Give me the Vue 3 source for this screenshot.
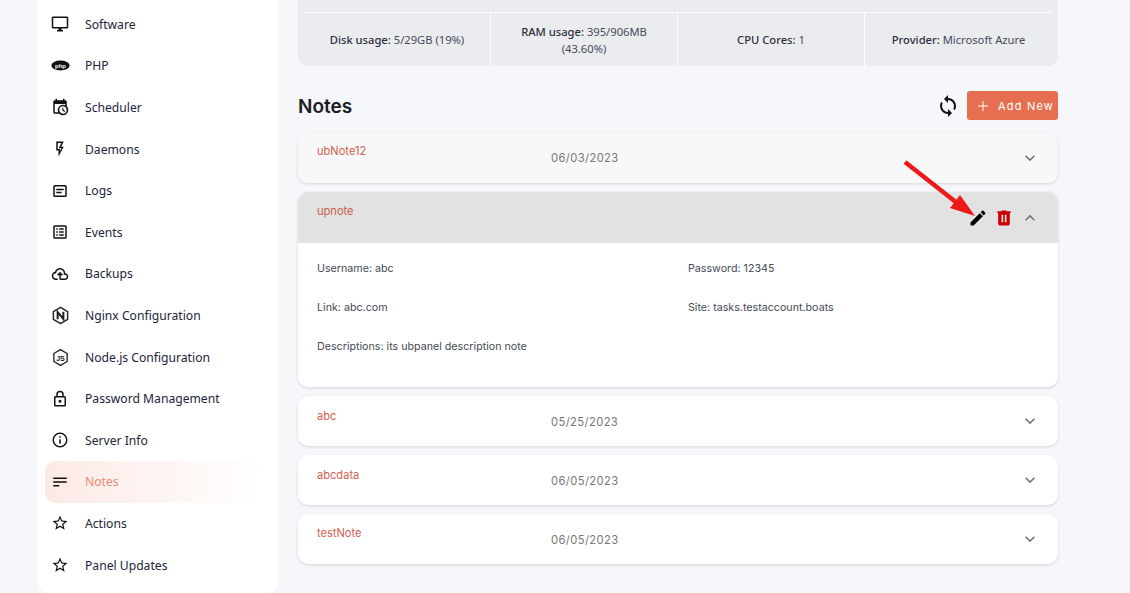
<script setup>
const P = {
  monitor: 'M21,16H3V4H21M21,2H3C1.89,2 1,2.89 1,4V16A2,2 0 0,0 3,18H10V20H8V22H16V20H14V18H21A2,2 0 0,0 23,16V4C23,2.89 22.1,2 21,2Z',
  clock: 'M15,13H16.5V15.82L18.94,17.23L18.19,18.53L15,16.69V13M19,8H5V19H9.67C9.24,18.09 9,17.07 9,16A7,7 0 0,1 16,9C17.07,9 18.09,9.24 19,9.67V8M5,21C3.89,21 3,20.1 3,19V5C3,3.89 3.89,3 5,3H6V1H8V3H16V1H18V3H19A2,2 0 0,1 21,5V11.1C22.24,12.36 23,14.09 23,16A7,7 0 0,1 16,23C14.09,23 12.36,22.24 11.1,21H5M16,11.15A4.85,4.85 0 0,0 11.15,16C11.15,18.68 13.32,20.85 16,20.85A4.85,4.85 0 0,0 20.85,16C20.85,13.32 18.68,11.15 16,11.15Z',
  bolt: 'M7,2H17L13.5,9H17L10,22V14H7V2M9,4V12H12V14.66L14,11H10.24L13.76,4H9Z',
  logs: 'M5,4H19A2,2 0 0,1 21,6V18A2,2 0 0,1 19,20H5A2,2 0 0,1 3,18V6A2,2 0 0,1 5,4M5,6V18H19V6H5M7,9H17V11H7V9M7,13H14V15H7V13Z',
  events: 'M5,3H19A2,2 0 0,1 21,5V19A2,2 0 0,1 19,21H5A2,2 0 0,1 3,19V5A2,2 0 0,1 5,3M5,5V19H19V5H5M7,7H9V9H7V7M11,7H17V9H11V7M7,11H9V13H7V11M11,11H17V13H11V11M7,15H9V17H7V15M11,15H17V17H11V15Z',
  cloud: 'M6.5 20Q4.22 20 2.61 18.43 1 16.85 1 14.58 1 12.63 2.17 11.1 3.35 9.57 5.25 9.15 5.88 6.85 7.75 5.43 9.63 4 12 4 14.93 4 16.96 6.04 19 8.07 19 11 20.73 11.2 21.86 12.5 23 13.78 23 15.5 23 17.38 21.69 18.69 20.38 20 18.5 20H13Q12.18 20 11.59 19.41 11 18.83 11 18V12.85L9.4 14.4L8 13L12 9L16 13L14.6 14.4L13 12.85V18H18.5Q19.55 18 20.27 17.27 21 16.55 21 15.5 21 14.45 20.27 13.73 19.55 13 18.5 13H17V11Q17 8.93 15.54 7.46 14.07 6 12 6 9.93 6 8.46 7.46 7 8.93 7 11H6.5Q5.05 11 4.03 12.03 3 13.05 3 14.5 3 15.95 4.03 17 5.05 18 6.5 18H9V20Z',
  lock: 'M12,17A2,2 0 0,0 14,15C14,13.89 13.1,13 12,13A2,2 0 0,0 10,15A2,2 0 0,0 12,17M18,8A2,2 0 0,1 20,10V20A2,2 0 0,1 18,22H6A2,2 0 0,1 4,20V10C4,8.89 4.9,8 6,8H7V6A5,5 0 0,1 12,1A5,5 0 0,1 17,6V8H18M6,10V20H18V10H6M12,3A3,3 0 0,0 9,6V8H15V6A3,3 0 0,0 12,3Z',
  info: 'M11,9H13V7H11M12,20C7.59,20 4,16.41 4,12C4,7.59 7.59,4 12,4C16.41,4 20,7.59 20,12C20,16.41 16.41,20 12,20M12,2A10,10 0 0,0 2,12A10,10 0 0,0 12,22A10,10 0 0,0 22,12A10,10 0 0,0 12,2M11,17H13V11H11V17Z',
  notes: 'M3,18H11V16H3ZM3,6V8H21V6ZM3,13H21V11H3Z',
  star: 'M12,15.39L8.24,17.66L9.23,13.38L5.91,10.5L10.29,10.13L12,6.09L13.71,10.13L18.09,10.5L14.77,13.38L15.76,17.66M22,9.24L14.81,8.63L12,2L9.19,8.63L2,9.24L7.45,13.97L5.82,21L12,17.27L18.18,21L16.54,13.97L22,9.24Z',
  sync: 'M12,18A6,6 0 0,1 6,12C6,11 6.25,10.03 6.7,9.2L5.24,7.74C4.46,8.97 4,10.43 4,12A8,8 0 0,0 12,20V23L16,19L12,15M12,4V1L8,5L12,9V6A6,6 0 0,1 18,12C18,13 17.75,13.97 17.3,14.8L18.76,16.26C19.54,15.03 20,13.57 20,12A8,8 0 0,0 12,4Z',
  down: 'M7.41,8.58L12,13.17L16.59,8.58L18,10L12,16L6,10L7.41,8.58Z',
  up: 'M7.41,15.41L12,10.83L16.59,15.41L18,14L12,8L6,14L7.41,15.41Z',
  pencil: 'M20.71,7.04C21.1,6.65 21.1,6 20.71,5.63L18.37,3.29C18,2.9 17.35,2.9 16.96,3.29L15.12,5.12L18.87,8.87M3,17.25V21H6.75L17.81,9.93L14.06,6.18L3,17.25Z',
  trash: 'M9,3V4H4V6H5V19A2,2 0 0,0 7,21H17A2,2 0 0,0 19,19V6H20V4H15V3H9M9,8H11V17H9V8M13,8H15V17H13V8Z'
}
const menu = [
  { label: 'Software', icon: 'monitor' },
  { label: 'PHP', icon: 'php' },
  { label: 'Scheduler', icon: 'clock' },
  { label: 'Daemons', icon: 'bolt' },
  { label: 'Logs', icon: 'logs' },
  { label: 'Events', icon: 'events' },
  { label: 'Backups', icon: 'cloud' },
  { label: 'Nginx Configuration', icon: 'nginx' },
  { label: 'Node.js Configuration', icon: 'node' },
  { label: 'Password Management', icon: 'lock' },
  { label: 'Server Info', icon: 'info' },
  { label: 'Notes', icon: 'notes', active: true },
  { label: 'Actions', icon: 'star' },
  { label: 'Panel Updates', icon: 'star' }
]
const stats = [
  { k: 'Disk usage:', v: '5/29GB (19%)' },
  { k: 'RAM usage:', v: '395/906MB', v2: '(43.60%)' },
  { k: 'CPU Cores:', v: '1' },
  { k: 'Provider:', v: 'Microsoft Azure' }
]
const topNotes = [{ title: 'ubNote12', date: '06/03/2023' }]
const restNotes = [
  { title: 'abc', date: '05/25/2023' },
  { title: 'abcdata', date: '06/05/2023' },
  { title: 'testNote', date: '06/05/2023' }
]
const fields = [
  'Username: abc', 'Password: 12345',
  'Link: abc.com', 'Site: tasks.testaccount.boats',
  'Descriptions: its ubpanel description note'
]
</script>

<template>
  <div class="page">
    <aside class="side">
      <div v-for="m in menu" :key="m.label" class="item" :class="{ active: m.active }">
        <span class="ico">
          <svg v-if="m.icon === 'php'" viewBox="0 0 24 24" width="19" height="19">
            <ellipse cx="12" cy="12" rx="11.5" ry="6.2" fill="#111" />
            <text x="12" y="14.8" text-anchor="middle" class="phptxt">php</text>
          </svg>
          <svg v-else-if="m.icon === 'nginx'" viewBox="0 0 24 24" width="19" height="19">
            <path d="M12 1.8 21 7V17L12 22.2 3 17V7Z" fill="none" stroke="#222" stroke-width="1.8" stroke-linejoin="round" />
            <path d="M8.4 16.6V7.6L15.6 16.4V7.4" fill="none" stroke="#222" stroke-width="2.6" />
          </svg>
          <svg v-else-if="m.icon === 'node'" viewBox="0 0 24 24" width="19" height="19">
            <path d="M12 2 20.4 6.9V17.1L12 22 3.6 17.1V6.9Z" fill="none" stroke="#222" stroke-width="1.7" stroke-linejoin="round" />
            <text x="12" y="16" text-anchor="middle" class="jstxt">JS</text>
          </svg>
          <svg v-else viewBox="0 0 24 24" width="18" height="18"><path :d="P[m.icon]" fill="#111" /></svg>
        </span>
        <span class="lbl">{{ m.label }}</span>
      </div>
    </aside>

    <main class="main">
      <section class="stats">
        <div class="rule"></div>
        <div class="cells">
          <div v-for="s in stats" :key="s.k" class="cell">
            <div><b>{{ s.k }}</b> {{ s.v }}</div>
            <div v-if="s.v2">{{ s.v2 }}</div>
          </div>
        </div>
      </section>

      <header class="head">
        <h1>Notes</h1>
        <svg class="sync" viewBox="0 0 24 24" width="24" height="24"><path :d="P.sync" fill="#111" /></svg>
        <button class="add">
          <svg viewBox="0 0 12 12" width="12" height="12"><path d="M6 1V11M1 6H11" stroke="#fff" stroke-width="1" fill="none" /></svg>
          <span>Add New</span>
        </button>
      </header>

      <div class="list">
        <article v-for="n in topNotes" :key="n.title" class="note faded">
          <div class="row">
            <span class="title">{{ n.title }}</span>
            <span class="date">{{ n.date }}</span>
            <svg class="chev" viewBox="0 0 24 24" width="20" height="20"><path :d="P.down" fill="#6f7480" /></svg>
          </div>
        </article>

        <article class="note">
          <div class="row open">
            <span class="title">upnote</span>
            <div class="acts">
              <svg viewBox="0 0 24 24" width="20" height="20"><path :d="P.pencil" fill="#000" /></svg>
              <svg viewBox="0 0 24 24" width="20" height="20"><path :d="P.trash" fill="#cc0000" /></svg>
              <svg viewBox="0 0 24 24" width="20" height="20"><path :d="P.up" fill="#6f7480" /></svg>
            </div>
          </div>
          <div class="body">
            <p v-for="f in fields" :key="f">{{ f }}</p>
          </div>
        </article>

        <article v-for="n in restNotes" :key="n.title" class="note rest">
          <div class="row">
            <span class="title">{{ n.title }}</span>
            <span class="date">{{ n.date }}</span>
            <svg class="chev" viewBox="0 0 24 24" width="20" height="20"><path :d="P.down" fill="#6f7480" /></svg>
          </div>
        </article>
      </div>
    </main>

    <svg class="arrow" width="90" height="70" viewBox="0 0 90 70">
      <line x1="2" y1="5" x2="54" y2="46" stroke="#ee1a1a" stroke-width="4.5" />
      <path d="M72 59 L47 51 L57 38 Z" fill="#ee1a1a" />
    </svg>
  </div>
</template>

<style>
html, body { margin: 0; background: #f5f7fb; overflow: hidden; }
</style>

<style scoped>
.page {
  position: relative;
  display: flex;
  width: 1130px;
  height: 593px;
  overflow: hidden;
  background: #f5f7fb;
  font-family: "Noto Sans", sans-serif;
  color: #25293a;
}
.side {
  box-sizing: border-box;
  width: 240px;
  height: 593px;
  margin-left: 38px;
  padding: 3.5px 13px 0 7px;
  background: #fff;
  border-radius: 0 0 10px 10px;
}
.item {
  display: flex;
  align-items: center;
  height: 41.6px;
  border-radius: 10px;
  font-size: 12.15px;
  color: #20243a;
}
.item.active {
  background: linear-gradient(90deg, #fce9e5, #fff);
  color: #f08a75;
}
.ico { display: flex; justify-content: center; width: 30px; margin-right: 10px; }
.phptxt { font: 700 7.5px "Liberation Sans", sans-serif; fill: #fff; }
.jstxt { font: 700 9px "Liberation Sans", sans-serif; fill: #222; }
.main { width: 760px; margin-left: 20px; }
.stats {
  height: 66px;
  padding: 0 6px;
  box-sizing: border-box;
  background: #ebecf0;
  border-radius: 0 0 10px 10px;
}
.rule { height: 12px; border-bottom: 1px solid #fff; }
.cells { display: grid; grid-template-columns: repeat(4, 1fr); height: 53px; }
.cell {
  display: flex;
  flex-direction: column;
  align-items: center;
  justify-content: center;
  padding: 0 20px;
  text-align: center;
  font-size: 11.2px;
  line-height: 17px;
  color: #454a5a;
  border-right: 1px solid #fff;
}
.cell:last-child { border-right: 0; }
.cell b { font-weight: 500; color: #2b2f3d; }
.head {
  display: flex;
  align-items: center;
  height: 29px;
  margin-top: 25px;
}
.head h1 {
  flex: 1;
  margin: 0;
  padding-top: 1px;
  font: 600 19px "Inter", sans-serif;
  color: #1c1c24;
}
.sync { margin-right: 7px; }
.add {
  display: flex;
  align-items: center;
  gap: 9px;
  width: 91px;
  height: 29px;
  padding: 0 0 0 10px;
  border: 0;
  border-radius: 3px;
  background: #e76f51;
  color: #fff;
  font: 400 11px "Inter", sans-serif;
  letter-spacing: 1.2px;
}
.list { display: flex; flex-direction: column; gap: 9.4px; margin-top: 13px; }
.note {
  background: #fff;
  border-radius: 10px;
  overflow: hidden;
  box-shadow: 0 1px 3px rgba(60, 60, 70, .18);
}
.row {
  position: relative;
  display: flex;
  height: 49.6px;
  padding-left: 19px;
  font-family: "Inter", sans-serif;
}
.note.faded .row { background: #f8f8f8; }
.row.open { height: 51px; background: #e2e2e2; }
.title { width: 234px; padding-top: 11.6px; font-size: 11.1px; line-height: 15px; color: #d4604f; }
.note.faded .title { padding-top: 11px; }
.note.rest .title { padding-top: 12.3px; }
.note.rest:last-child .title { padding-top: 11.6px; }
.row.open .title { color: #c9604f; }
.date { margin-top: 18.3px; font-size: 11.2px; line-height: 15px; letter-spacing: .4px; color: #777; }
.chev { position: absolute; right: 18px; top: 15px; }
.acts { display: flex; gap: 6px; position: absolute; right: 18px; top: 15.6px; }
.body {
  display: grid;
  grid-template-columns: 371px 1fr;
  row-gap: 23px;
  padding: 18px 19px 32px;
  font: 10.7px/16px "Inter", sans-serif;
  color: #444a55;
}
.body p { margin: 0; }
.arrow { position: absolute; left: 903px; top: 157px; }
</style>
